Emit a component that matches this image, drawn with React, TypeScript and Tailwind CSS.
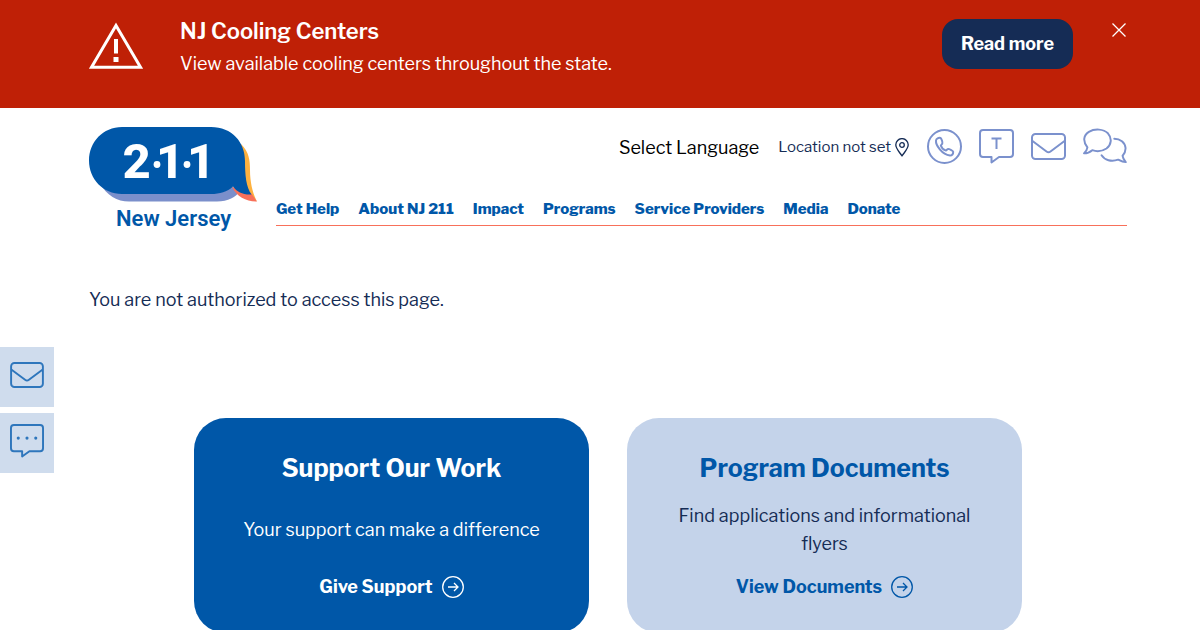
import { useState } from 'react';

const navLinks = ['Get Help', 'About NJ 211', 'Impact', 'Programs', 'Service Providers', 'Media', 'Donate'];

const cards = [
  {
    title: 'Support Our Work',
    text: 'Your support can make a difference',
    link: 'Give Support',
    card: 'bg-[#0057a8] text-white',
    body: 'text-white',
  },
  {
    title: 'Program Documents',
    text: 'Find applications and informational flyers',
    link: 'View Documents',
    card: 'bg-[#c4d3ea] text-[#0057a8]',
    body: 'text-[#152c55]',
  },
];

function WarningIcon() {
  return (
    <svg viewBox="0 0 54 47" className="w-[54px] h-[47px] shrink-0" fill="none" aria-hidden="true">
      <path d="M27 3.5 51.5 45.2H2.5Z" stroke="#fff" strokeWidth="3" />
      <path d="M25 17h4v14.5H25zM24.5 35h5v5h-5z" fill="#fff" />
    </svg>
  );
}

function Logo() {
  return (
    <svg viewBox="0 0 168 104" className="w-[168px] h-[104px]" role="img" aria-label="2-1-1 New Jersey">
      <path d="M10 55C18 69 28 74.500 40 74.500H128C139 74.500 147 70 151 64L140 58Z" fill="#7b8fcb" />
      <path d="M152 17C160 25 161 33 161 43C161 56 164 67 168 74.500L155 62Z" fill="#fdb13f" />
      <path d="M143 60C148 70 157 74.500 168 74.500L162 66Z" fill="#f8705a" />
      <path d="M33 0H122C143 0 156 15 156 34C156 48 157 60 162.500 67.500C154 68 148 65 144 59.500C138 65 131 67 122 67H33C14 67 0 52 0 33.500S14 0 33 0Z" fill="#0057a8" />
      <g fill="#fff" fontFamily="Roboto, sans-serif" fontWeight="800" fontSize="49">
        <text x="33.500" y="51">2</text>
        <text x="67" y="51">1</text>
        <text x="98" y="51">1</text>
      </g>
      <circle cx="68" cy="37.500" r="3.400" fill="#fff" />
      <circle cx="98" cy="37.500" r="3.400" fill="#fff" />
      <text x="27" y="99" fill="#0057a8" fontFamily="Roboto, sans-serif" fontWeight="600" fontSize="22">New Jersey</text>
    </svg>
  );
}

function PhoneIcon() {
  return (
    <svg viewBox="0 0 35 35" className="size-[35px]" fill="none" stroke="#7b91cd" strokeWidth="2" strokeLinejoin="round" aria-hidden="true">
      <circle cx="17.500" cy="17.500" r="16.500" />
      <path d="M9 11.500C8.500 16 15 25.500 23 26.500C25 26.500 26.200 24.800 26.200 22.700C26.200 21.700 21.700 19.500 20.800 20L19 21.600C17 21 14.500 18.500 13.800 16.500L15.300 14.600C15.800 13.500 14.500 9.500 13.500 8.900C11.500 8.500 9.200 9.500 9 11.500Z" />
    </svg>
  );
}

function TextIcon() {
  return (
    <svg viewBox="0 0 35 35" className="size-[35px]" fill="none" stroke="#7b91cd" strokeWidth="2" strokeLinejoin="round" aria-hidden="true">
      <path d="M4 1H31Q34 1 34 4V25Q34 28 31 28H20L12.500 33.500V28H4Q1 28 1 25V4Q1 1 4 1Z" />
      <path d="M12.500 9.500H22.500M17.500 9.500V20" />
    </svg>
  );
}

function MailIcon({ className }: { className: string }) {
  return (
    <svg viewBox="0 0 35 27" className={className} fill="none" stroke="currentColor" strokeWidth="2" strokeLinejoin="round" aria-hidden="true">
      <rect x="1" y="1" width="33" height="25" rx="3.500" />
      <path d="M1.500 8 15.500 18.500Q17.500 20 19.500 18.500L33.500 8" />
    </svg>
  );
}

function ChatsIcon() {
  return (
    <svg viewBox="0 0 45 36" className="w-11 h-9" fill="none" stroke="#7b91cd" strokeWidth="2" strokeLinecap="round" strokeLinejoin="round" aria-hidden="true">
      <path d="M4.500 19.500C-.500 13 .500 7 6 3.500C12 0 21 .500 25.500 5C30 10 29 17 24 20.500C19.500 23.500 14 24 9.500 22.300C7 24.500 4.500 25.500 1 25.500C3 23.500 4.300 22 4.500 19.500Z" />
      <path d="M32 10.500C38 10.500 43 14.500 43.500 20C43.700 23.500 42.500 25.800 40.500 28C40.800 30.500 42 32 43.700 34.500C41 34.500 38.500 33.300 36 32C29 34.500 22 32.500 19 27.500" />
    </svg>
  );
}

function ChatBoxIcon() {
  return (
    <svg viewBox="0 0 35 35" className="size-[34px]" fill="none" stroke="#2e76bc" strokeWidth="2" strokeLinejoin="round" aria-hidden="true">
      <path d="M4 1H31Q34 1 34 4V25Q34 28 31 28H20L12.500 33.500V28H4Q1 28 1 25V4Q1 1 4 1Z" />
      <g fill="#2e76bc" stroke="none">
        <circle cx="8.500" cy="14.500" r="1.600" />
        <circle cx="17.500" cy="14.500" r="1.600" />
        <circle cx="26.500" cy="14.500" r="1.600" />
      </g>
    </svg>
  );
}

function PinIcon() {
  return (
    <svg viewBox="0 0 14 19" className="w-[14px] h-[19px]" fill="none" stroke="#152c55" strokeWidth="1.300" strokeLinejoin="round" aria-hidden="true">
      <path d="M7 18C4 13.500.800 10.500.800 6.800A6.200 6.200 0 0 1 13.200 6.800C13.200 10.500 10 13.500 7 18Z" />
      <circle cx="7" cy="7" r="2.300" />
    </svg>
  );
}

function ArrowIcon() {
  return (
    <svg viewBox="0 0 22 22" className="size-[22px]" fill="none" stroke="currentColor" strokeWidth="1.300" aria-hidden="true">
      <circle cx="11" cy="11" r="10.300" />
      <path d="M6 11H16M12 7l4 4-4 4" />
    </svg>
  );
}

export default function App() {
  const [showAlert, setShowAlert] = useState(true);

  return (
    <div className="relative min-h-screen overflow-hidden bg-white font-['Libre_Franklin','Inter','Liberation_Sans',sans-serif] text-lg text-[#152c55]">
      {/* Alert banner */}
      {showAlert && (
        <section className="flex min-h-[108px] items-start bg-[#bf2006] pl-[89px] pr-[74px] text-white">
          <div className="mt-[22px]">
            <WarningIcon />
          </div>
          <div className="ml-[37px] mt-4 flex-1">
            <h2 className="text-[22px] font-semibold leading-[30px]">NJ Cooling Centers</h2>
            <p className="text-lg leading-9">View available cooling centers throughout the state.</p>
          </div>
          <a href="#" className="mt-[19px] flex h-[50px] w-[131px] items-center justify-center rounded-2xl bg-[#152c55] text-lg font-bold">
            Read more
          </a>
          <button type="button" aria-label="Close" onClick={() => setShowAlert(false)} className="ml-[39px] mt-[23px]">
            <svg viewBox="0 0 14 14" className="size-[14px]" stroke="#fff" strokeWidth="1.300" aria-hidden="true">
              <path d="M.500.500l13 13M13.500.500l-13 13" />
            </svg>
          </button>
        </section>
      )}

      {/* Header */}
      <header className="flex pl-[89px] pr-[73px] pt-[19px]">
        <a href="#" className="shrink-0">
          <Logo />
        </a>
        <div className="ml-[19px] flex-1">
          <div className="flex h-[38px] items-center justify-end">
            <div className="flex items-center gap-[19px] pt-[3px]">
              <a href="#" className="text-lg text-black">Select Language</a>
              <a href="#" className="flex items-center gap-1 text-[15px]">
                Location not set
                <PinIcon />
              </a>
            </div>
            <div className="ml-[18px] flex items-center gap-[17px]">
              <a href="#" aria-label="Call"><PhoneIcon /></a>
              <a href="#" aria-label="Text"><TextIcon /></a>
              <a href="#" aria-label="Email" className="text-[#7b91cd]"><MailIcon className="w-[35px] h-[27px]" /></a>
              <a href="#" aria-label="Chat"><ChatsIcon /></a>
            </div>
          </div>
          <nav className="mt-[33px] flex h-[28px] gap-[19px] border-b border-[#f8705a] text-[15px] font-extrabold leading-[22px] text-[#0057a8]">
            {navLinks.map((link) => (
              <a key={link} href="#" className="whitespace-nowrap">{link}</a>
            ))}
          </nav>
        </div>
      </header>

      <main className="pl-[89px] pr-[73px] pt-[55px]">
        <p className="leading-7">You are not authorized to access this page.</p>

        {/* Call to action cards */}
        <div className="mx-[105px] mt-[104px] grid grid-cols-2 gap-[38px]">
          {cards.map((c) => (
            <section key={c.title} className={`flex min-h-[215px] flex-col items-center rounded-[32px] px-[38px] pb-8 pt-8 text-center ${c.card}`}>
              <h2 className="text-[25px] font-bold leading-9">{c.title}</h2>
              <p className={`my-auto leading-7 ${c.body}`}>{c.text}</p>
              <a href="#" className="flex items-center gap-[9px] font-bold leading-7">
                {c.link}
                <ArrowIcon />
              </a>
            </section>
          ))}
        </div>
      </main>

      {/* Floating contact buttons */}
      <aside className="absolute left-0 top-[347px] flex flex-col gap-[6px] text-[#2e76bc]">
        <a href="#" aria-label="Email us" className="flex h-[60px] w-[54px] items-center justify-center bg-[#cfdced] pb-1">
          <MailIcon className="w-[34px] h-[26px]" />
        </a>
        <a href="#" aria-label="Chat with us" className="flex h-[60px] w-[54px] items-center justify-center bg-[#cfdced] pb-1">
          <ChatBoxIcon />
        </a>
      </aside>
    </div>
  );
}
